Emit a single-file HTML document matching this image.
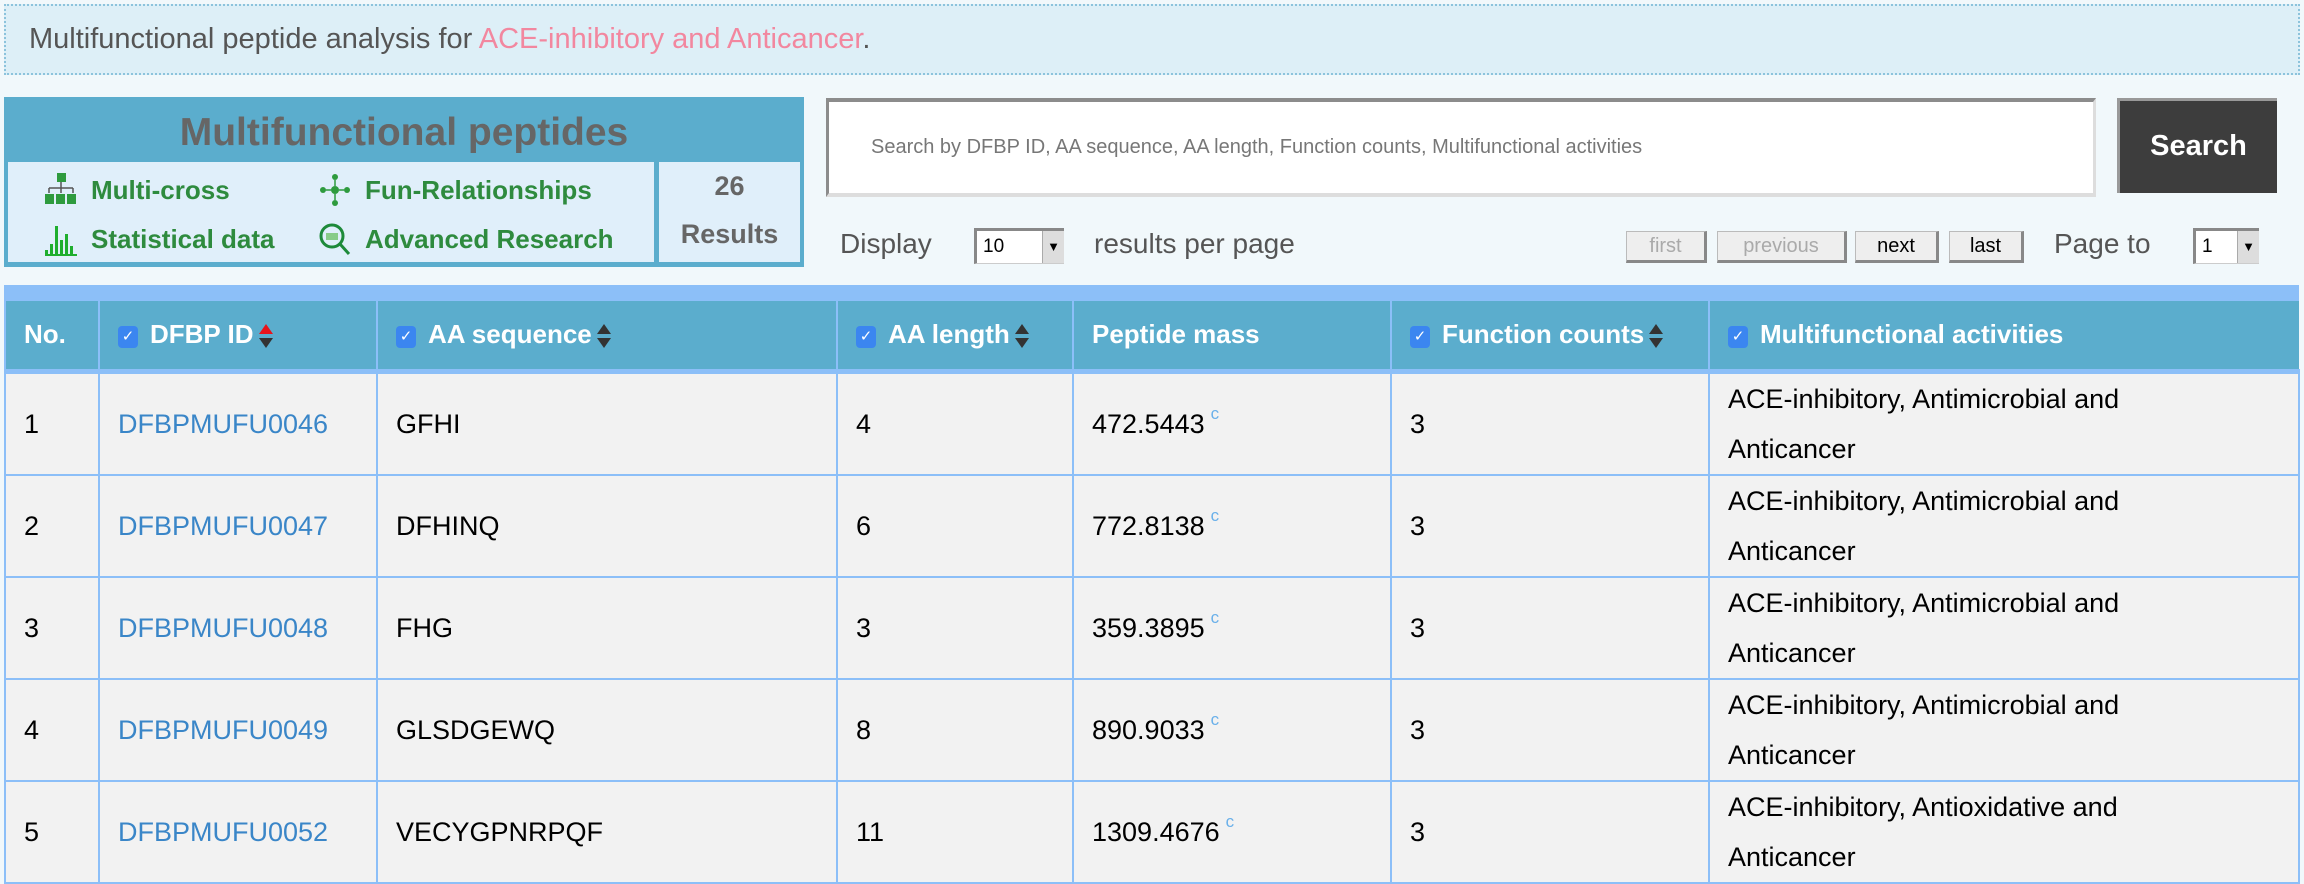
<!DOCTYPE html>
<html><head><meta charset="utf-8"><style>
*{box-sizing:border-box;margin:0;padding:0}
body{width:2304px;height:878px;overflow:hidden;background:#f1f8fb;font-family:"Liberation Sans",Arial,sans-serif;position:relative}
.ban{position:absolute;left:4px;top:4px;width:2296px;height:71px;background:#ddeff7;border:2px dotted #8cc3dc;font-size:29px;color:#555;padding-left:23px;line-height:67px}
.ban span{color:#f2879f}
.lbox{position:absolute;left:4px;top:97px;width:800px;height:170px;background:#5badcd}
.lbox h1{position:absolute;left:0;width:800px;top:14px;text-align:center;font-size:39px;color:#666;font-weight:bold}
.inner{position:absolute;left:4px;top:65px;width:646px;height:100px;background:#e0effa}
.res{position:absolute;left:655px;top:65px;width:141px;height:100px;background:#e0effa;text-align:center;color:#666;font-weight:bold;font-size:27px;line-height:48px;padding-top:0px}
.it{position:absolute;font-size:26px;font-weight:bold;color:#2e8b3e}
.it svg{position:absolute;left:-46px;top:-2px}
.sin{position:absolute;left:826px;top:98px;width:1270px;height:99px;background:#fff;border-top:4px solid #8c8c8c;border-left:3px solid #8c8c8c;border-right:3px solid #ddd;border-bottom:4px solid #ddd;font-size:20px;color:#777;padding-left:42px;line-height:91px}
.sbtn{position:absolute;left:2117px;top:98px;width:160px;height:95px;background:#3d3d3d;border-top:3px solid #999;border-left:3px solid #999;color:#fff;font-weight:bold;font-size:29px;text-align:center;line-height:90px}
.t{position:absolute;font-size:28px;color:#555;top:228px}
.sel{position:absolute;top:228px;height:36px;background:#fff;border-top:3px solid #888;border-left:3px solid #888;border-bottom:1px solid #ccc;font-size:19px;padding-left:6px;line-height:32px}
.sel i{position:absolute;right:0;top:0;width:22px;height:32px;background:#ddd;border-left:1px solid #aaa;font-style:normal;font-size:13px;text-align:center;line-height:32px;color:#000}
.pb{position:absolute;top:231px;height:32px;background:#eee;border:1px solid #bbb;border-right:3px solid #888;border-bottom:3px solid #888;font-size:20px;text-align:center;line-height:28px}
table{position:absolute;left:4px;top:285px;width:2296px;border-collapse:collapse;table-layout:fixed;border-top:16px solid #8cbff8}
th{background:#5badcd;color:#fff;font-size:26px;text-align:left;height:78px;padding-left:18px;border-left:2px solid #8cbff8;border-bottom:5px solid #8cbff8;white-space:nowrap}
td{background:#f2f2f2;font-size:27px;color:#000;height:102px;padding-left:18px;border:2px solid #8cbff8;line-height:50px}
td a{color:#3a86c8;text-decoration:none}
.cb{display:inline-block;width:20px;height:22px;background:#3b86f0;border-radius:4px;color:#fff;font-size:15px;text-align:center;line-height:22px;vertical-align:2px;margin-right:12px;font-weight:normal}
.ar{display:inline-block;vertical-align:middle;margin-left:4px}
sup{color:#6ab0ea;font-size:17px;margin-left:6px;vertical-align:0;position:relative;top:-14px;line-height:0}
</style></head><body>
<div class="ban">Multifunctional peptide analysis for <span>ACE-inhibitory and Anticancer</span>.</div>
<div class="lbox"><h1>Multifunctional peptides</h1>
<div class="inner">
<div class="it" style="left:83px;top:13px"><svg width="32" height="34" viewBox="0 0 32 34"><rect x="12" y="0" width="9" height="9" fill="#2e9b3e"/><path d="M16 9v6M4 15h24M4 15v5M16 15v5M28 15v5" stroke="#555" stroke-width="1.5" fill="none"/><rect x="0" y="21" width="9" height="10" fill="#2e9b3e"/><rect x="11" y="21" width="9" height="10" fill="#2e9b3e"/><rect x="22" y="21" width="9" height="10" fill="#2e9b3e"/></svg>Multi-cross</div>
<div class="it" style="left:357px;top:13px"><svg width="32" height="34" viewBox="0 0 32 34"><g fill="#2e9b3e"><circle cx="16" cy="4" r="3"/><circle cx="16" cy="17" r="4"/><circle cx="16" cy="30" r="3"/><circle cx="4" cy="17" r="3"/><circle cx="28" cy="17" r="3"/></g><path d="M16 7v6M16 21v6M7 17h5M20 17h5" stroke="#2e9b3e" stroke-width="1.5"/></svg>Fun-Relationships</div>
<div class="it" style="left:83px;top:62px"><svg width="32" height="34" viewBox="0 0 32 34"><g fill="#1fae2e"><rect x="0" y="28" width="3" height="5"/><rect x="5" y="22" width="3" height="11"/><rect x="10" y="4" width="3" height="29"/><rect x="15" y="18" width="3" height="15"/><rect x="20" y="12" width="3" height="21"/><rect x="25" y="24" width="3" height="9"/><rect x="0" y="32" width="32" height="2"/></g></svg>Statistical data</div>
<div class="it" style="left:357px;top:62px"><svg width="32" height="34" viewBox="0 0 32 34"><circle cx="13" cy="14" r="11" fill="none" stroke="#1e8a3a" stroke-width="3"/><path d="M21 22l9 10" stroke="#1e8a3a" stroke-width="3"/><rect x="7" y="11" width="12" height="7" fill="#8c8"/></svg>Advanced Research</div>
</div>
<div class="res">26<br>Results</div>
</div>
<div class="sin">Search by DFBP ID, AA sequence, AA length, Function counts, Multifunctional activities</div>
<div class="sbtn">Search</div>
<div class="t" style="left:840px">Display</div>
<div class="sel" style="left:974px;width:90px">10<i>▼</i></div>
<div class="t" style="left:1094px">results per page</div>
<div class="pb" style="left:1626px;width:81px;color:#aaa">first</div>
<div class="pb" style="left:1717px;width:130px;color:#aaa">previous</div>
<div class="pb" style="left:1855px;width:84px">next</div>
<div class="pb" style="left:1949px;width:75px">last</div>
<div class="t" style="left:2054px">Page to</div>
<div class="sel" style="left:2193px;width:66px">1<i>▼</i></div>
<table>
<colgroup><col style="width:94px"><col style="width:278px"><col style="width:460px"><col style="width:236px"><col style="width:318px"><col style="width:318px"><col></colgroup>
<tr><th>No.</th><th><span class="cb">✓</span>DFBP ID<svg class="ar" width="16" height="28" viewBox="0 0 16 28"><path d="M8 2L15 12H1z" fill="#e8141c"/><path d="M8 26L15 16H1z" fill="#333"/></svg></th><th><span class="cb">✓</span>AA sequence<svg class="ar" width="16" height="28" viewBox="0 0 16 28"><path d="M8 2L15 12H1z" fill="#333"/><path d="M8 26L15 16H1z" fill="#333"/></svg></th><th><span class="cb">✓</span>AA length<svg class="ar" width="16" height="28" viewBox="0 0 16 28"><path d="M8 2L15 12H1z" fill="#333"/><path d="M8 26L15 16H1z" fill="#333"/></svg></th><th>Peptide mass</th><th><span class="cb">✓</span>Function counts<svg class="ar" width="16" height="28" viewBox="0 0 16 28"><path d="M8 2L15 12H1z" fill="#333"/><path d="M8 26L15 16H1z" fill="#333"/></svg></th><th><span class="cb">✓</span>Multifunctional activities</th></tr>
<tr><td>1</td><td><a>DFBPMUFU0046</a></td><td>GFHI</td><td>4</td><td>472.5443<sup>c</sup></td><td>3</td><td>ACE-inhibitory, Antimicrobial and<br>Anticancer</td></tr>
<tr><td>2</td><td><a>DFBPMUFU0047</a></td><td>DFHINQ</td><td>6</td><td>772.8138<sup>c</sup></td><td>3</td><td>ACE-inhibitory, Antimicrobial and<br>Anticancer</td></tr>
<tr><td>3</td><td><a>DFBPMUFU0048</a></td><td>FHG</td><td>3</td><td>359.3895<sup>c</sup></td><td>3</td><td>ACE-inhibitory, Antimicrobial and<br>Anticancer</td></tr>
<tr><td>4</td><td><a>DFBPMUFU0049</a></td><td>GLSDGEWQ</td><td>8</td><td>890.9033<sup>c</sup></td><td>3</td><td>ACE-inhibitory, Antimicrobial and<br>Anticancer</td></tr>
<tr><td>5</td><td><a>DFBPMUFU0052</a></td><td>VECYGPNRPQF</td><td>11</td><td>1309.4676<sup>c</sup></td><td>3</td><td>ACE-inhibitory, Antioxidative and<br>Anticancer</td></tr>
</table>
</body></html>
